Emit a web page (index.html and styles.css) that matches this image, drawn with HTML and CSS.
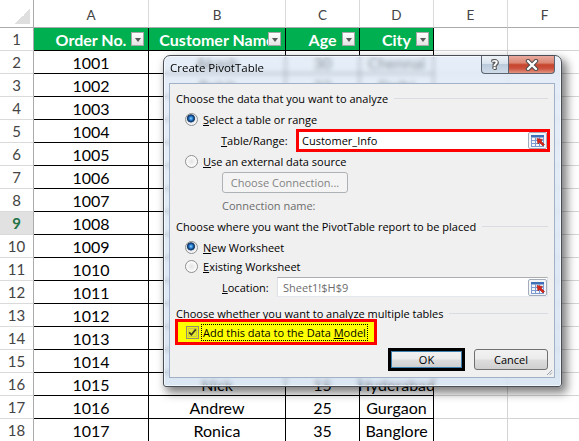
FILE: index.html
```html
<!DOCTYPE html>
<html>
<head>
<meta charset="utf-8">
<title>Create PivotTable</title>
<link rel="stylesheet" href="styles.css">
</head>
<body>
<div class="sheet">
  <div class="corner"></div>
  <div class="ch">A</div><div class="ch">B</div><div class="ch">C</div><div class="ch">D</div><div class="ch">E</div><div class="ch">F</div>

  <div class="rh">1</div>
  <div class="c th">Order No.<span class="fb"></span></div>
  <div class="c th">Customer Name<span class="fb"></span></div>
  <div class="c th">Age<span class="fb"></span></div>
  <div class="c th">City<span class="fb"></span></div>
  <div class="c"></div><div class="c"></div>

  <div class="rh">2</div><div class="c t">1001</div><div class="c t">Akash</div><div class="c t">30</div><div class="c t">Chennai</div><div class="c"></div><div class="c"></div>
  <div class="rh">3</div><div class="c t">1002</div><div class="c t">Rohit</div><div class="c t">22</div><div class="c t">Delhi</div><div class="c"></div><div class="c"></div>
  <div class="rh">4</div><div class="c t">1003</div><div class="c t">Smita</div><div class="c t">28</div><div class="c t">Mumbai</div><div class="c"></div><div class="c"></div>
  <div class="rh">5</div><div class="c t">1004</div><div class="c t">Rajesh</div><div class="c t">40</div><div class="c t">Kolkata</div><div class="c"></div><div class="c"></div>
  <div class="rh">6</div><div class="c t">1005</div><div class="c t">Priya</div><div class="c t">27</div><div class="c t">Pune</div><div class="c"></div><div class="c"></div>
  <div class="rh">7</div><div class="c t">1006</div><div class="c t">Suresh</div><div class="c t">33</div><div class="c t">Jaipur</div><div class="c"></div><div class="c"></div>
  <div class="rh">8</div><div class="c t">1007</div><div class="c t">Anita</div><div class="c t">29</div><div class="c t">Noida</div><div class="c"></div><div class="c"></div>
  <div class="rh act">9</div><div class="c t">1008</div><div class="c t">Vikas</div><div class="c t">31</div><div class="c t">Lucknow</div><div class="c"></div><div class="c"></div>
  <div class="rh">10</div><div class="c t">1009</div><div class="c t">Meena</div><div class="c t">26</div><div class="c t">Indore</div><div class="c"></div><div class="c"></div>
  <div class="rh">11</div><div class="c t">1010</div><div class="c t">Karan</div><div class="c t">38</div><div class="c t">Bhopal</div><div class="c"></div><div class="c"></div>
  <div class="rh">12</div><div class="c t">1011</div><div class="c t">Neha</div><div class="c t">24</div><div class="c t">Chennai</div><div class="c"></div><div class="c"></div>
  <div class="rh">13</div><div class="c t">1012</div><div class="c t">Amit</div><div class="c t">45</div><div class="c t">Delhi</div><div class="c"></div><div class="c"></div>
  <div class="rh">14</div><div class="c t">1013</div><div class="c t">Pooja</div><div class="c t">32</div><div class="c t">Mumbai</div><div class="c"></div><div class="c"></div>
  <div class="rh">15</div><div class="c t">1014</div><div class="c t">Ravi</div><div class="c t">36</div><div class="c t">Kolkata</div><div class="c"></div><div class="c"></div>
  <div class="rh">16</div><div class="c t">1015</div><div class="c t">Nick</div><div class="c t">15</div><div class="c t">Hyderabad</div><div class="c"></div><div class="c"></div>
  <div class="rh">17</div><div class="c t">1016</div><div class="c t">Andrew</div><div class="c t">25</div><div class="c t">Gurgaon</div><div class="c"></div><div class="c"></div>
  <div class="rh">18</div><div class="c t">1017</div><div class="c t">Ronica</div><div class="c t">35</div><div class="c t">Banglore</div><div class="c"></div><div class="c"></div>
</div>

<div class="dlg">
  <div class="titlebar">
    <span class="ttl">Create PivotTable</span>
    <div class="capbtns">
      <div class="help"><span class="q">?</span></div>
      <div class="close">
        <svg width="14" height="12" viewBox="0 0 14 12"><path d="M3 2 L11 10 M11 2 L3 10" stroke="#4d4d4d" stroke-width="4.4" stroke-linecap="round"/><path d="M3 2 L11 10 M11 2 L3 10" stroke="#fff" stroke-width="2.4" stroke-linecap="round"/></svg>
      </div>
    </div>
  </div>
  <div class="panel">
    <div class="head h1"><span>Choose the data that you want to analyze</span><i class="rule"></i></div>
    <div class="opt o1"><span class="radio on"></span><span><u>S</u>elect a table or range</span></div>
    <div class="field range">
      <span class="lbl lbl-range"><u>T</u>able/Range:</span>
      <div class="inp hlred"><span class="val">Customer_Info</span>
        <svg class="pick" width="19" height="17" viewBox="0 0 19 17"><rect x="0.5" y="0.5" width="18" height="16" rx="1.5" fill="#f3f5f8" stroke="#a3adba"/><rect x="3" y="3" width="13" height="2.5" fill="#3d6fb6"/><path d="M3 8.5H16M3 11.5H16M3 14.5H16M3.5 5V15M7.5 5V15M11.5 5V15M15.5 5V15" stroke="#7c9bd0" stroke-width="1"/><path d="M9 6.5 L14.5 7.5 L13 9 L16.5 12.5 L15 14 L11.5 10.5 L10 12 Z" fill="#d8261c" stroke="#9c1a12" stroke-width="0.6"/></svg>
      </div>
    </div>
    <div class="opt o2"><span class="radio"></span><span><u>U</u>se an external data source</span></div>
    <div class="btn dis conn">Choose Connection...</div>
    <div class="dimtxt cname">Connection name:</div>
    <div class="head h2"><span>Choose where you want the PivotTable report to be placed</span><i class="rule"></i></div>
    <div class="opt o3"><span class="radio on"></span><span><u>N</u>ew Worksheet</span></div>
    <div class="opt o4"><span class="radio"></span><span><u>E</u>xisting Worksheet</span></div>
    <div class="field loc">
      <span class="lbl lbl-loc"><u>L</u>ocation:</span>
      <div class="inp disinp"><span class="val gray">Sheet1!$H$9</span>
        <svg class="pick" width="19" height="17" viewBox="0 0 19 17"><rect x="0.5" y="0.5" width="18" height="16" rx="1.5" fill="#f3f5f8" stroke="#a3adba"/><rect x="3" y="3" width="13" height="2.5" fill="#3d6fb6"/><path d="M3 8.5H16M3 11.5H16M3 14.5H16M3.5 5V15M7.5 5V15M11.5 5V15M15.5 5V15" stroke="#7c9bd0" stroke-width="1"/><path d="M9 6.5 L14.5 7.5 L13 9 L16.5 12.5 L15 14 L11.5 10.5 L10 12 Z" fill="#d8261c" stroke="#9c1a12" stroke-width="0.6"/></svg>
      </div>
    </div>
    <div class="head h3"><span>Choose whether you want to analyze multiple tables</span><i class="rule"></i></div>
    <div class="hlbox">
      <svg class="chk" width="13" height="13" viewBox="0 0 13 13"><rect x="0.5" y="0.5" width="12" height="12" fill="#f2f200" stroke="#8f8f70"/><rect x="2.5" y="2.5" width="8" height="8" fill="#e6e630" stroke="#c9c94a"/><path d="M3.2 6.4 L5.4 8.8 L9.8 3.4" fill="none" stroke="#3b3b1c" stroke-width="1.7"/></svg>
      <span class="focus">Add this data to the Data <u>M</u>odel</span>
    </div>
    <div class="btnrow">
      <div class="okwrap"><div class="btn ok">OK</div></div>
      <div class="btn cancel">Cancel</div>
    </div>
    <svg class="grip" width="7" height="7" viewBox="0 0 7 7"><path d="M6 1 L1 6 M6 3.5 L3.5 6" stroke="#9aa3ad" stroke-width="1"/></svg>
  </div>
</div>
</body>
</html>
```
FILE: styles.css
```css
html, body {
  margin: 0;
  padding: 0;
}
body {
  width: 579px;
  height: 441px;
  overflow: hidden;
  position: relative;
  background: #ffffff;
  font-family: Lato, "Liberation Sans", sans-serif;
}

/* ---------- spreadsheet ---------- */
.sheet {
  display: grid;
  grid-template-columns: 34px 115px 137px 74px 74px 74px 74px;
  grid-template-rows: 28px;
  grid-auto-rows: 23px;
}
.sheet > div {
  box-sizing: border-box;
  border-right: 1px solid #d4d4d4;
  border-bottom: 1px solid #d4d4d4;
  display: flex;
  align-items: center;
  justify-content: center;
  overflow: hidden;
  white-space: nowrap;
}
.corner {
  background: linear-gradient(to bottom right, transparent 50%, #dfdfdf 50%) right 3px bottom 3px / 15px 15px no-repeat;
  border-right-color: #ababab !important;
  border-bottom-color: #ababab !important;
}
.sheet .ch {
  color: #444;
  font-size: 13.5px;
  border-bottom-color: #ababab;
  border-right-color: #dadada;
  padding-top: 2px;
}
.sheet .rh {
  color: #444;
  font-size: 15px;
  border-right-color: #ababab;
  border-bottom-color: #dadada;
}
.sheet .rh.act {
  background: #e1e1e1;
  color: #217346;
  font-weight: bold;
}
.c {
  font-size: 16px;
  color: #000;
}
.sheet .t {
  border-right-color: #000;
  border-bottom-color: #000;
}
.sheet .th {
  position: relative;
  background: #00b050;
  color: #fff;
  font-weight: bold;
  font-size: 16px;
  border-right-color: #000;
  border-bottom-color: #000;
  justify-content: center;
}
.fb {
  position: absolute;
  right: 4px;
  top: 4px;
  width: 13px;
  height: 14px;
  box-sizing: border-box;
  border: 1px solid #a6a6a6;
  background: linear-gradient(#ffffff, #e4e4e4);
  display: flex;
  align-items: center;
  justify-content: center;
}
.fb::after {
  content: "";
  width: 0;
  height: 0;
  border-left: 3.5px solid transparent;
  border-right: 3.5px solid transparent;
  border-top: 4px solid #595959;
  margin-top: 1px;
}

/* ---------- dialog ---------- */
.dlg {
  position: absolute;
  left: 163px;
  top: 55px;
  width: 399px;
  height: 332px;
  box-sizing: border-box;
  border: 1px solid #4a4f57;
  border-radius: 7px 7px 3px 3px;
  background: linear-gradient(rgba(214, 228, 244, 0.62), rgba(196, 214, 236, 0.6));
  backdrop-filter: blur(2.5px);
  -webkit-backdrop-filter: blur(2.5px);
  box-shadow: inset 0 0 0 1px rgba(255, 255, 255, 0.65), 4px 5px 10px 1px rgba(0, 0, 0, 0.5);
  display: flex;
  flex-direction: column;
  font-family: "Open Sans", "Noto Sans", sans-serif;
  font-size: 11px;
  color: #000;
}
.titlebar {
  height: 27px;
  flex: none;
  display: flex;
  justify-content: space-between;
  align-items: flex-start;
}
.ttl {
  margin: 5px 0 0 6px;
  line-height: 14px;
  font-size: 11.5px;
  color: #000;
}
.capbtns {
  display: flex;
  margin-right: 6px;
  height: 18px;
}
.help, .close {
  box-sizing: border-box;
  height: 18px;
  border: 1px solid #5b6470;
  border-top: none;
  display: flex;
  align-items: center;
  justify-content: center;
}
.help {
  width: 27px;
  border-right: none;
  border-radius: 0 0 0 4px;
  background: linear-gradient(#eef2f7 0%, #d9e3ee 45%, #bccbdc 50%, #cfdbe8 100%);
}
.q {
  color: #fff;
  font-family: "DejaVu Sans", sans-serif;
  font-weight: bold;
  font-size: 12px;
  line-height: 12px;
  text-shadow: 1px 0 #555, -1px 0 #555, 0 1px #555, 0 -1px #555, 1px 1px #666, -1px -1px #666;
}
.close {
  width: 47px;
  border-radius: 0 0 4px 0;
  background: linear-gradient(#e8aa9e 0%, #dc8774 40%, #c6432d 52%, #cc5440 75%, #e39582 100%);
}

.panel {
  position: relative;
  flex: 1;
  margin: 0 6px 8px 5px;
  background: #f0f0f0;
  border: 1px solid #a2b2c6;
  padding: 0 6px;
  display: flex;
  flex-direction: column;
}
.head {
  display: flex;
  align-items: center;
  height: 16px;
  white-space: nowrap;
}
.rule {
  flex: 1;
  height: 1px;
  background: #d9dde3;
  margin-left: 6px;
}
.h1 { margin-top: 6px; }
.h2 { margin-top: 5px; }
.h3 { margin-top: 8px; }

.opt {
  display: flex;
  align-items: center;
  height: 16px;
  margin-left: 9px;
  white-space: nowrap;
}
.o1 { margin-top: 5px; }
.o2 { margin-top: 1px; }
.o3 { margin-top: 5px; }
.o4 { margin-top: 3px; }

.radio {
  width: 13px;
  height: 13px;
  box-sizing: border-box;
  border-radius: 50%;
  border: 1px solid #8e8f8f;
  background: radial-gradient(circle at 50% 50%, #e3e4e5 0, #f2f2f2 3px, #ffffff 6px);
  margin-right: 5px;
  flex: none;
}
.radio.on {
  background: radial-gradient(circle at 45% 40%, #9fd4fb 0, #2f86d8 1.6px, #0c3a78 3.2px, #32475f 3.8px, #dfe6ee 4.4px, #f7f7f7 6px);
}

.field {
  display: flex;
  align-items: center;
  margin-left: 45px;
}
.range {
  margin-top: 2px;
  height: 23px;
  margin-right: -2px;
}
.lbl-range { width: 75px; }
.loc {
  margin-top: 3px;
  height: 20px;
  margin-left: 46px;
}
.lbl-loc { width: 55px; }
.inp {
  flex: 1;
  height: 100%;
  box-sizing: border-box;
  display: flex;
  align-items: center;
  justify-content: space-between;
  background: #fff;
}
.hlred {
  border: 3px solid #ff0000;
}
.hlred .val { padding-left: 3px; }
.disinp {
  border: 1px solid #b5b5b5;
  border-color: #abadb3 #e2e3ea #e3e9ef #dbdfe6;
  background: #ffffff;
  padding-right: 0;
}
.disinp .val { padding-left: 5px; }
.gray { color: #6d6d6d; }
.pick { flex: none; }

.btn {
  box-sizing: border-box;
  display: flex;
  align-items: center;
  justify-content: center;
  border: 1px solid #707070;
  border-radius: 3px;
  background: linear-gradient(#f2f2f2 0%, #ebebeb 48%, #dddddd 52%, #cfcfcf 100%);
  white-space: nowrap;
}
.btn.dis {
  border-color: #adb2b5;
  background: #f4f4f4;
  color: #838383;
}
.conn {
  margin: 3px 0 0 46px;
  width: 126px;
  height: 21px;
}
.dimtxt {
  color: #6d6d6d;
  height: 16px;
  display: flex;
  align-items: center;
}
.cname {
  margin: 4px 0 0 46px;
}

.hlbox {
  margin: -2px 0 0 -1px;
  width: 202px;
  height: 26px;
  box-sizing: border-box;
  border: 3px solid #ff0000;
  background: #ffff00;
  display: flex;
  align-items: center;
  padding-left: 8px;
}
.chk {
  flex: none;
  margin-right: 2px;
}
.focus {
  border: 1px dotted #000;
  padding: 0 1px;
  line-height: 15px;
  white-space: nowrap;
}

.btnrow {
  margin-top: 3px;
  height: 22px;
  display: flex;
  justify-content: flex-end;
  align-items: flex-start;
}
.okwrap {
  width: 77px;
  height: 23px;
  box-sizing: border-box;
  border: 3px solid #000;
  display: flex;
}
.ok {
  flex: 1;
  border-radius: 0;
  border-color: #3c7fb1;
}
.cancel {
  width: 74px;
  height: 21px;
  margin: 1px 0 0 9px;
}
.grip {
  position: absolute;
  right: 1px;
  bottom: 1px;
}
```
